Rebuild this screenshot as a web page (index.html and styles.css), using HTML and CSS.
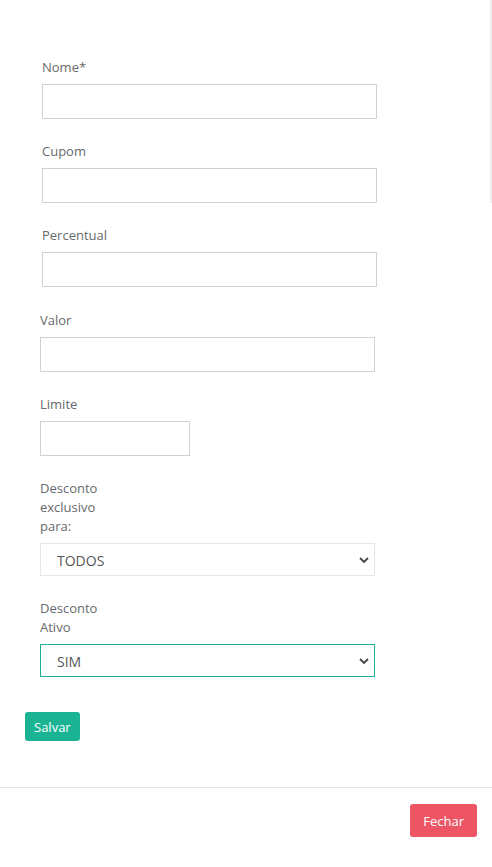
FILE: index.html
```html
<!DOCTYPE html>
<html lang="pt">
<head>
<meta charset="utf-8">
<title>Cupom</title>
<link rel="stylesheet" href="styles.css">
</head>
<body>
<div class="page">
  <div class="scroll-track"></div>
  <div class="modal-body">
    <form class="form">
      <div class="fields fields-a">
        <div class="group">
          <label class="label">Nome*</label>
          <input class="input input-wide" type="text">
        </div>
        <div class="group">
          <label class="label">Cupom</label>
          <input class="input input-wide" type="text">
        </div>
        <div class="group group-last-a">
          <label class="label">Percentual</label>
          <input class="input input-wide" type="text">
        </div>
      </div>
      <div class="fields fields-b">
        <div class="group">
          <label class="label">Valor</label>
          <input class="input input-wide" type="text">
        </div>
        <div class="group">
          <label class="label">Limite</label>
          <input class="input input-short" type="text">
        </div>
        <div class="group">
          <label class="label label-narrow">Desconto exclusivo para:</label>
          <div class="select-wrap">
            <select class="select">
              <option>TODOS</option>
            </select>
            <svg class="chevron" width="10" height="6" viewBox="0 0 10 6"><polyline points="1,1 5,5 9,1" fill="none" stroke="#444" stroke-width="1.8"/></svg>
          </div>
        </div>
        <div class="group group-last">
          <label class="label label-narrow">Desconto Ativo</label>
          <div class="select-wrap">
            <select class="select select-focus">
              <option>SIM</option>
            </select>
            <svg class="chevron" width="10" height="6" viewBox="0 0 10 6"><polyline points="1,1 5,5 9,1" fill="none" stroke="#444" stroke-width="1.8"/></svg>
          </div>
        </div>
      </div>
      <div class="actions">
        <button type="button" class="btn btn-primary">Salvar</button>
      </div>
    </form>
  </div>
  <div class="modal-footer">
    <button type="button" class="btn btn-danger">Fechar</button>
  </div>
</div>
</body>
</html>
```
FILE: styles.css
```css
* { box-sizing: border-box; }
html, body { margin: 0; padding: 0; background: #fff; }
body {
  font-family: "Open Sans", "Liberation Sans", sans-serif;
  font-size: 13px;
  color: #676a6c;
}
.page { position: relative; width: 492px; min-height: 867px; }
.scroll-track {
  position: absolute; top: 0; right: 0;
  width: 2px; height: 203px; background: #eeeeee;
}
.modal-body { padding-top: 58px; }
.fields { display: flex; flex-direction: column; }
.fields-a { padding-left: 42px; }
.fields-b { padding-left: 40px; }
.group { display: flex; flex-direction: column; align-items: flex-start; margin-bottom: 23px; }
.group-last-a { margin-bottom: 24px; }
.group-last { margin-bottom: 35px; }
.label { display: block; line-height: 19px; margin-bottom: 7px; }
.label-narrow { max-width: 80px; }
.input {
  height: 35px; border: 1px solid #d2d2d2; background: #fff;
  font-family: inherit; font-size: 14px; padding: 0 12px; outline: none; margin: 0;
}
.input-wide { width: 335px; }
.input-short { width: 150px; }
.select-wrap { position: relative; width: 335px; }
.select {
  -webkit-appearance: none; appearance: none;
  width: 335px; height: 33px; border: 1px solid #e5e6e7; background: #fff;
  font-family: inherit; font-size: 14px; color: #555; padding: 2px 16px 0; margin: 0;
  border-radius: 0; outline: none; display: block;
}
.select-focus { border-color: #1ab394; }
.chevron { position: absolute; right: 6px; top: 14px; }
.actions { padding-left: 25px; display: flex; }
.btn {
  border: none; border-radius: 3px; color: #fff;
  font-family: inherit; font-size: 13px; cursor: pointer; margin: 0;
}
.btn-primary { background: #1ab394; height: 29px; padding: 0 9px; }
.modal-footer {
  margin-top: 46px; border-top: 1px solid #e5e5e5;
  padding: 16px 15px 30px 0; display: flex; justify-content: flex-end;
}
.btn-danger { background: #ed5565; height: 33px; padding: 0 13px; }
```
